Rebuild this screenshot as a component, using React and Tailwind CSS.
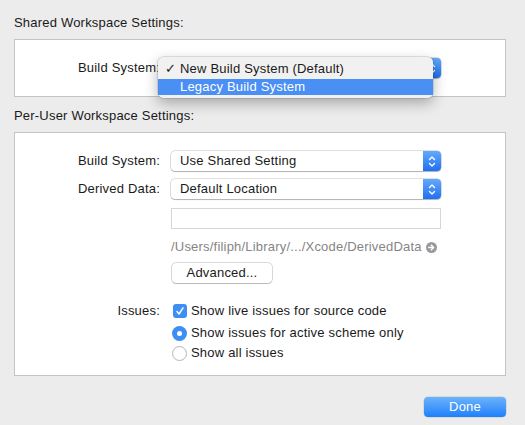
import React from "react";

const font = { fontFamily: '"Liberation Sans", Arial, sans-serif' };

function Stepper() {
  return (
    <div className="flex h-full w-[18px] items-center justify-center rounded-r-[4px] bg-gradient-to-b from-[#63a9fb] to-[#1f6ff0]">
      <svg width="8" height="13" viewBox="0 0 8 13" fill="none" stroke="white" strokeWidth="1.4" strokeLinecap="round" strokeLinejoin="round">
        <polyline points="1.5,4.5 4,2 6.5,4.5" />
        <polyline points="1.5,8.5 4,11 6.5,8.5" />
      </svg>
    </div>
  );
}

function Popup({ text }) {
  return (
    <div className="flex h-[20px] w-[270px] items-stretch rounded-[4px] bg-white shadow-[0_0_0_0.5px_rgba(0,0,0,0.25),0_1px_1px_rgba(0,0,0,0.2)]">
      <div className="flex flex-1 items-center pl-[9px] text-[13px] text-[#1a1a1a]">{text}</div>
      <Stepper />
    </div>
  );
}

function Row({ label, children, className = "" }) {
  return (
    <div className={"flex items-center " + className}>
      <div className="w-[145px] shrink-0 text-right text-[13px] text-[#1a1a1a]">{label}</div>
      <div className="ml-[11px] flex items-center">{children}</div>
    </div>
  );
}

export default function App() {
  return (
    <div className="flex h-[425px] w-[525px] flex-col bg-[#ececec] px-[14px] pt-[15px] tracking-[0.2px]" style={font}>
      <div className="h-[16px] text-[13px] leading-[16px] text-[#1a1a1a]">Shared Workspace Settings:</div>
      <div className="relative mt-[8px] h-[58px] w-[492px] border border-[#c4c4c4] bg-white">
        <Row label="Build System:" className="mt-[18px]">
          <Popup text="New Build System (Default)" />
        </Row>
        <div className="absolute left-[143px] top-[17px] z-10 flex h-[41px] w-[275px] flex-col rounded-[5px] bg-[#f1f1f1] pt-[2px] shadow-[0_0_0_0.5px_rgba(0,0,0,0.2),0_5px_14px_rgba(0,0,0,0.3)]">
          <div className="flex h-[20px] items-center text-[13px] text-[#1a1a1a]">
            <span className="w-[22px] pl-[7px] text-[13px]" style={{ fontFamily: '"DejaVu Sans", sans-serif' }}>✓</span>
            <span>New Build System (Default)</span>
          </div>
          <div className="flex h-[16px] items-center bg-[#4a8ff3] pl-[22px] text-[13px] text-white">
            Legacy Build System
          </div>
        </div>
      </div>

      <div className="mt-[11px] h-[16px] text-[13px] leading-[16px] text-[#1a1a1a]">Per-User Workspace Settings:</div>
      <div className="mt-[8px] flex h-[244px] w-[492px] flex-col border border-[#c4c4c4] bg-white pt-[18px]">
        <Row label="Build System:">
          <Popup text="Use Shared Setting" />
        </Row>
        <Row label="Derived Data:" className="mt-[8px]">
          <Popup text="Default Location" />
        </Row>
        <Row label="" className="mt-[9px]">
          <div className="h-[21px] w-[270px] border border-[#d6d6d6] bg-white" />
        </Row>
        <Row label="" className="mt-[10px]">
          <div className="flex h-[16px] items-center text-[13px] text-[#858585]">
            /Users/filiph/Library/.../Xcode/DerivedData
            <svg className="ml-[4px]" width="11" height="11" viewBox="0 0 11 11">
              <circle cx="5.5" cy="5.5" r="5.5" fill="#9a9a9a" />
              <path d="M2.8 5.5h4.6M5.4 3.3l2.2 2.2-2.2 2.2" stroke="white" strokeWidth="1.4" fill="none" strokeLinecap="round" strokeLinejoin="round" />
            </svg>
          </div>
        </Row>
        <Row label="" className="mt-[8px]">
          <div className="ml-[1px] flex h-[20px] w-[100px] items-center justify-center rounded-[4px] bg-white text-[13px] text-[#1a1a1a] shadow-[0_0_0_0.5px_rgba(0,0,0,0.3),0_1px_1px_rgba(0,0,0,0.15)]">
            Advanced...
          </div>
        </Row>
        <Row label="Issues:" className="mt-[20px] h-[16px]">
          <div className="ml-[2px] flex items-center">
            <div className="flex h-[14px] w-[14px] items-center justify-center rounded-[3px] bg-[#3d8ff6]">
              <svg width="10" height="10" viewBox="0 0 10 10" fill="none" stroke="white" strokeWidth="1.5" strokeLinecap="round" strokeLinejoin="round">
                <polyline points="2,5.5 4,8 8,1.8" />
              </svg>
            </div>
            <span className="ml-[4px] text-[13px] text-[#1a1a1a]">Show live issues for source code</span>
          </div>
        </Row>
        <Row label="" className="mt-[6px] h-[16px]">
          <div className="ml-[1px] flex items-center">
            <div className="flex h-[15px] w-[15px] items-center justify-center rounded-full bg-[#3d8ff6]">
              <div className="h-[5px] w-[5px] rounded-full bg-white" />
            </div>
            <span className="ml-[4px] text-[13px] text-[#1a1a1a]">Show issues for active scheme only</span>
          </div>
        </Row>
        <Row label="" className="mt-[4px] h-[16px]">
          <div className="ml-[1px] flex items-center">
            <div className="h-[15px] w-[15px] rounded-full border border-[#b5b5b5] bg-white" />
            <span className="ml-[4px] text-[13px] text-[#1a1a1a]">Show all issues</span>
          </div>
        </Row>
      </div>

      <div className="mt-[21px] flex w-[492px] justify-end">
        <div className="flex h-[20px] w-[82px] items-center justify-center rounded-[4px] bg-gradient-to-b from-[#6ab2fb] to-[#1b80fa] text-[13px] text-white shadow-[0_0_0_0.5px_rgba(0,0,0,0.15)]">
          Done
        </div>
      </div>
    </div>
  );
}
